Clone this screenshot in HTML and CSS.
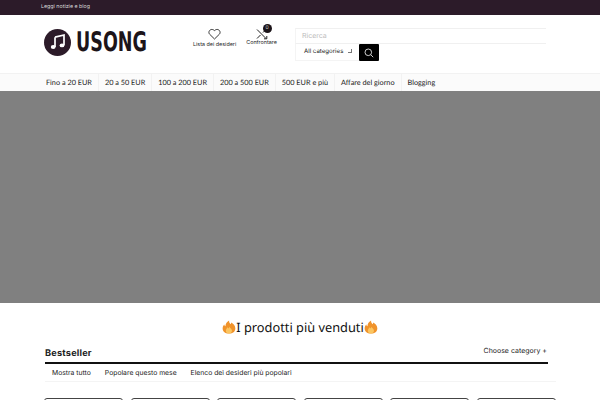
FILE: index.html
```html
<!DOCTYPE html>
<html lang="it">
<head>
    <meta charset="UTF-8">
    <title>Usong</title>
    <link rel="stylesheet" href="styles.css">
</head>
<body>

<div class="topbar">
    <a class="topbar-link">Leggi notizie e blog</a>
</div>

<header class="header">
    <div class="logo">
        <span class="logo-disc">
            <svg width="18" height="18" viewBox="0 0 18 18"><path d="M6 4.200 15 2v10.200" fill="none" stroke="#fff" stroke-width="1.700"/><ellipse cx="4.200" cy="14" rx="2.400" ry="1.900" fill="#fff"/><ellipse cx="13" cy="12.400" rx="2.400" ry="1.900" fill="#fff"/><path d="M6 14V4.200" stroke="#fff" stroke-width="1.700"/></svg>
        </span>
        <span class="logo-text">USONG</span>
    </div>
    <div class="header-links">
        <a class="header-link wish">
            <svg width="13" height="12" viewBox="0 0 13 12"><path d="M6.500 11 1.600 6.200C-.6 3.600 2.900-.6 6.500 2.600 10.100-.6 13.600 3.600 11.400 6.200Z" fill="none" stroke="#222" stroke-width=".9"/></svg>
            <span>Lista dei desideri</span>
        </a>
        <a class="header-link compare">
            <span class="compare-icon">
                <svg width="12" height="12" viewBox="0 0 12 12"><path d="M1 1.500 10 10.500M1 10.500 4.500 7M7 4.500 10.500 1M8 1h2.800v2.800M8 10.800h2.800V8" fill="none" stroke="#222" stroke-width="1"/></svg>
                <span class="badge">0</span>
            </span>
            <span>Confrontare</span>
        </a>
    </div>
    <form class="search">
        <div class="search-input">Ricerca</div>
        <div class="search-row">
            <div class="search-select">All categories <span class="caret"></span></div>
            <button class="search-btn" type="button">
                <svg width="10" height="10" viewBox="0 0 10 10"><circle cx="4.300" cy="4.300" r="3.300" fill="none" stroke="#fff" stroke-width=".8"/><path d="m6.800 6.800 2.400 2.400" stroke="#fff" stroke-width=".8"/></svg>
            </button>
        </div>
    </form>
</header>

<nav class="nav">
    <a>Fino a 20 EUR</a>
    <a>20 a 50 EUR</a>
    <a>100 a 200 EUR</a>
    <a>200 a 500 EUR</a>
    <a>500 EUR e più</a>
    <a>Affare del giorno</a>
    <a>Blogging</a>
</nav>

<div class="hero"></div>

<section class="products">
    <h2 class="products-title">
        <svg class="flame" width="14" height="14" viewBox="0 0 15 15"><path d="M7.500 14.500C3 14.500.5 12 .7 8.800.8 7 1.600 5.800 2.400 4.800c.2 1 .6 1.700 1.300 2C3.600 4.300 5 2 7.600.5c-.2 1.800.7 3 1.700 4.100.4-.6.6-1.100.6-1.800 2 1.200 4.500 3.300 4.400 6.300-.1 3.300-2.600 5.400-6.800 5.400Z" fill="#f0932b"/><path d="M7.500 14.500c-2 0-3.400-1.200-3.400-3 0-1.500 1.200-2.400 2-3.600.3.600.6 1 1.100 1.200.2-.7.500-1.100 1-1.500.2 1 2.500 2.200 2.500 4 0 1.700-1.400 2.900-3.200 2.900Z" fill="#fbc560"/></svg>I prodotti più venduti<svg class="flame" width="14" height="14" viewBox="0 0 15 15"><path d="M7.500 14.500C3 14.500.5 12 .7 8.800.8 7 1.600 5.800 2.400 4.800c.2 1 .6 1.700 1.300 2C3.600 4.300 5 2 7.600.5c-.2 1.800.7 3 1.700 4.100.4-.6.6-1.100.6-1.800 2 1.200 4.500 3.300 4.400 6.300-.1 3.300-2.600 5.400-6.800 5.400Z" fill="#f0932b"/><path d="M7.500 14.500c-2 0-3.400-1.200-3.400-3 0-1.500 1.200-2.400 2-3.600.3.600.6 1 1.100 1.200.2-.7.500-1.100 1-1.500.2 1 2.500 2.200 2.500 4 0 1.700-1.400 2.900-3.200 2.900Z" fill="#fbc560"/></svg>
    </h2>
    <div class="section-head">
        <h3>Bestseller</h3>
        <a class="choose">Choose category <span class="plus">+</span></a>
    </div>
    <div class="tabs">
        <a>Mostra tutto</a>
        <a>Popolare questo mese</a>
        <a>Elenco dei desideri più popolari</a>
    </div>
    <div class="cards">
        <div class="card"></div>
        <div class="card"></div>
        <div class="card"></div>
        <div class="card"></div>
        <div class="card"></div>
        <div class="card"></div>
    </div>
</section>

</body>
</html>
```

FILE: styles.css
```css
html, body {
    height: 400px;
    overflow: hidden;
}
body {
    margin: 0;
    font-family: Inter, "Open Sans", sans-serif;
    color: #222;
    background-color: #fff;
    text-rendering: geometricPrecision;
}
.topbar {
    height: 15px;
    padding-left: 41px;
    background-color: #2c1b29;
    color: #ddd;
    font-size: 5.300px;
    line-height: 14px;
}
.header {
    display: flex;
    height: 58px;
    padding-left: 44px;
}
.logo {
    display: flex;
    align-items: center;
    gap: 5px;
    width: 128px;
    height: 28px;
    margin-top: 13px;
}
.logo-disc {
    display: flex;
    align-items: center;
    justify-content: center;
    flex: none;
    width: 27px;
    height: 27px;
    border-radius: 50%;
    background-color: #2c1b29;
}
.logo-text {
    font-family: "DejaVu Sans", sans-serif;
    font-size: 27px;
    font-weight: 700;
    color: #1c1419;
    transform: scaleX(.65);
    transform-origin: left center;
}
.header-links {
    display: flex;
    gap: 10px;
    width: 102px;
    margin-left: 21px;
    padding-top: 13px;
}
.header-link {
    display: flex;
    flex-direction: column;
    align-items: center;
    font-size: 5.400px;
    white-space: nowrap;
}
.header-link svg {
    display: block;
}
.wish {
    gap: 2px;
}
.compare {
    gap: 0;
}
.compare-icon {
    position: relative;
    display: block;
    height: 12px;
}
.badge {
    position: absolute;
    top: -4px;
    left: 7px;
    width: 9px;
    height: 9px;
    border-radius: 50%;
    background-color: #1c1419;
    color: #ccc;
    font-size: 5px;
    line-height: 9px;
    text-align: center;
}
.search {
    width: 251px;
    margin-top: 13px;
}
.search-input {
    height: 14px;
    padding-left: 6px;
    border-top: 1px solid #f0f0f0;
    border-bottom: 1px solid #f0f0f0;
    border-left: 1px solid #f4f4f4;
    color: #bbb;
    font-size: 7px;
    line-height: 14px;
}
.search-row {
    display: flex;
}
.search-select {
    width: 55px;
    height: 16px;
    padding-left: 8px;
    border-left: 1px solid #f4f4f4;
    border-bottom: 1px solid #f4f4f4;
    font-size: 6.100px;
    line-height: 16px;
    white-space: nowrap;
}
.caret {
    display: inline-block;
    width: 3px;
    height: 3px;
    margin-left: 3px;
    border-right: 1px solid #777;
    border-bottom: 1px solid #777;
}
.search-btn {
    display: flex;
    align-items: center;
    justify-content: center;
    width: 20px;
    height: 17px;
    padding: 0;
    border: none;
    border-radius: 1px;
    background-color: #000;
}
.nav {
    display: flex;
    height: 17px;
    padding-left: 40px;
    border-top: 1px solid #f2f2f2;
    background-color: #fbfbfb;
    font-family: Lato, sans-serif;
    font-size: 7.300px;
    line-height: 17px;
}
.nav a {
    padding: 0 6px;
    border-right: 1px solid #f2f2f2;
    white-space: nowrap;
}
.nav a:last-child {
    border-right: none;
}
.hero {
    height: 212px;
    background-color: #808080;
}
.products {
    padding: 0 52px 0 45px;
}
.products-title {
    display: flex;
    align-items: center;
    justify-content: center;
    height: 17px;
    margin: 15px -7px 0 0;
    font-family: "Noto Sans", sans-serif;
    font-size: 12.800px;
    font-weight: 400;
    color: #111;
}
.section-head {
    display: flex;
    align-items: flex-start;
    justify-content: space-between;
    height: 17px;
    margin-top: 10px;
    padding-right: 1px;
    border-bottom: 2px solid #111;
}
.section-head h3 {
    margin: 3px 0 0;
    font-size: 9.200px;
    font-weight: 700;
    letter-spacing: .2px;
}
.choose {
    margin-top: 1px;
    font-size: 7px;
    line-height: 10px;
    white-space: nowrap;
}
.tabs {
    display: flex;
    gap: 14px;
    height: 17px;
    margin-right: -8px;
    padding-left: 7px;
    border-bottom: 1px solid #f4f4f4;
    font-size: 6.800px;
    line-height: 17px;
}
.cards {
    display: flex;
    gap: 7.500px;
    margin: 16px -8px 0 -1px;
}
.card {
    flex: none;
    width: 77px;
    height: 40px;
    border: 1px solid #444;
    border-radius: 3px;
}
```
